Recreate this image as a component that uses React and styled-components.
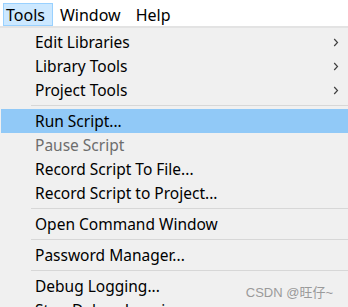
import React from "react";
import styled, { createGlobalStyle } from "styled-components";

const Global = createGlobalStyle`
  html, body { margin: 0; padding: 0; background: #ffffff; overflow: hidden; }
  body { font-family: "Noto Sans", "Noto Sans CJK SC", sans-serif; }
`;

const Page = styled.div`
  width: 348px;
  height: 307px;
  display: flex;
  flex-direction: column;
  position: relative;
  overflow: hidden;
`;

const MenuBar = styled.div`
  flex: none;
  height: 26px;
  display: flex;
  align-items: flex-end;
  padding-left: 3px;
  background: #ffffff;
  border-bottom: 2px solid #e3e3e3;
`;

const BarItem = styled.div`
  height: 23px;
  box-sizing: border-box;
  padding: 0 7px 0 ${(p) => (p.$first ? 2 : 6)}px;
  display: flex;
  align-items: center;
  font-size: 16px;
  color: #000;
  background: ${(p) => (p.$active ? "#cce8ff" : "transparent")};
  border: 1px solid ${(p) => (p.$active ? "#99d1ff" : "transparent")};
`;

const Menu = styled.div`
  flex: 1;
  min-height: 0;
  background: #f0f0f0;
  padding: 2px 0 0 1px;
  display: flex;
  flex-direction: column;
`;

const Item = styled.div`
  height: 24px;
  flex: none;
  display: flex;
  align-items: center;
  padding-left: 34px;
  padding-right: 9px;
  font-size: 15.5px;
  color: ${(p) => (p.$disabled ? "#6d6d6d" : "#000")};
  background: ${(p) => (p.$hover ? "#91c9f7" : "transparent")};
  white-space: nowrap;
`;

const Label = styled.span`
  flex: 1;
`;

const Separator = styled.div`
  height: 1px;
  margin: 3px 0 3px 30px;
  background: #d7d7d7;
  flex: none;
`;

const Watermark = styled.div`
  position: absolute;
  right: 15px;
  bottom: 6px;
  font-family: "Liberation Sans", "Noto Sans CJK SC", sans-serif;
  font-size: 13px;
  color: #9a9a9a;
`;

const Chevron = () => (
  <svg width="6" height="9" viewBox="0 0 6 9">
    <path d="M1.2 1 L4.5 4.5 L1.2 8" fill="none" stroke="#404040" strokeWidth="1.2" />
  </svg>
);

export default function App() {
  return (
    <Page>
      <Global />
      <MenuBar>
        <BarItem $active $first>Tools</BarItem>
        <BarItem>Window</BarItem>
        <BarItem>Help</BarItem>
      </MenuBar>
      <Menu>
        <Item><Label>Edit Libraries</Label><Chevron /></Item>
        <Item><Label>Library Tools</Label><Chevron /></Item>
        <Item><Label>Project Tools</Label><Chevron /></Item>
        <Separator />
        <Item $hover><Label>Run Script...</Label></Item>
        <Item $disabled><Label>Pause Script</Label></Item>
        <Item><Label>Record Script To File...</Label></Item>
        <Item><Label>Record Script to Project...</Label></Item>
        <Separator />
        <Item><Label>Open Command Window</Label></Item>
        <Separator />
        <Item><Label>Password Manager...</Label></Item>
        <Separator />
        <Item><Label>Debug Logging...</Label></Item>
        <Item><Label>Stop Debug Logging</Label></Item>
      </Menu>
      <Watermark>CSDN @旺仔~</Watermark>
    </Page>
  );
}
